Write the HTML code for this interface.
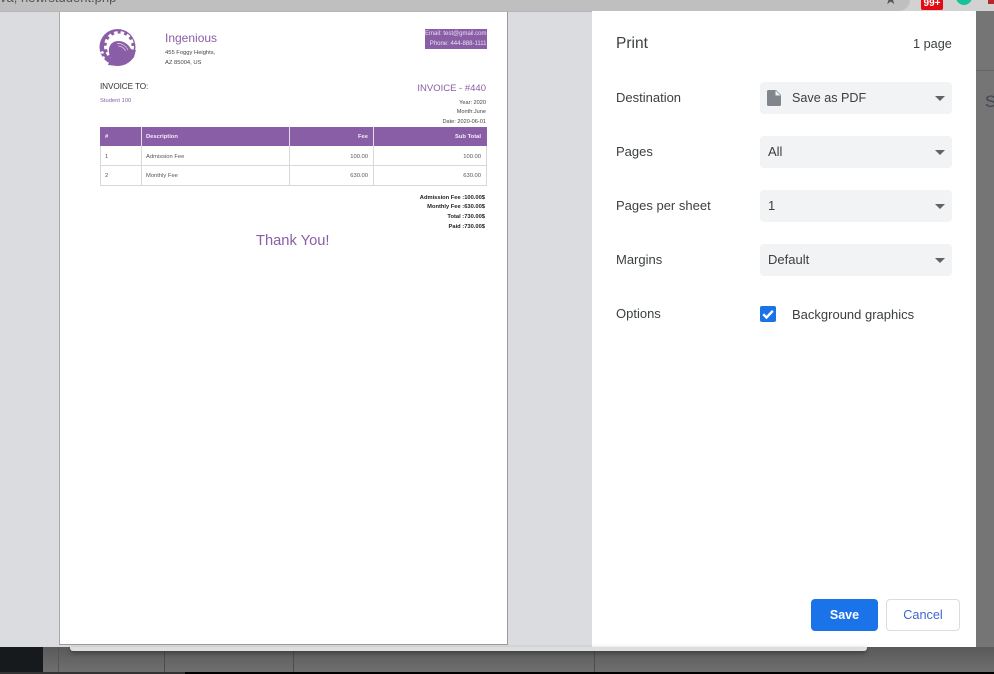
<!DOCTYPE html>
<html><head><meta charset="utf-8"><style>
html,body{margin:0;padding:0}
body{width:994px;height:674px;position:relative;overflow:hidden;background:#737373;font-family:"Liberation Sans",sans-serif}
.a{position:absolute;white-space:nowrap}
.l{left:616px;font-size:13px;color:#3c4043;line-height:16px}
.sel{left:760px;width:192px;height:32px;background:#f1f3f4;border-radius:4px}
.sel span{position:absolute;left:8px;top:8px;font-size:13px;line-height:16px;color:#3c4043}
.sel i{position:absolute;right:7px;top:14px;width:0;height:0;border-left:5.500px solid transparent;border-right:5.500px solid transparent;border-top:5px solid #5f6368}
.p{color:#8a5ea6}
.r{text-align:right}
.t{font-size:5.800px;line-height:9px;color:#555}
.h{font-size:5.800px;line-height:9px;font-weight:bold;color:#f3ecf7}
</style></head><body>
<div class="a" style="left:0;top:0;width:994px;height:11px;background:#d2d2d2"></div>
<div class="a" style="left:-20px;top:-12px;width:930px;height:23px;background:#bfbfbf;border-radius:0 12px 12px 0"></div>
<div class="a" style="left:0;top:-10px;font-size:13px;color:#555;line-height:16px">va, new/student.php</div>
<div class="a" style="left:884px;top:-8px;font-size:15px;color:#555;line-height:16px">★</div>
<div class="a" style="left:921px;top:0;width:22px;height:10px;background:#e30b13;color:#fff;font-size:10px;font-weight:bold;line-height:8px;text-align:center;border-radius:0 0 2px 2px">99+</div>
<div class="a" style="left:956px;top:-11px;width:16px;height:16px;border-radius:50%;background:#15c39a"></div>
<div class="a" style="left:988px;top:0;width:6px;height:4px;background:#b3282d"></div>
<div class="a" style="left:976px;top:11px;width:18px;height:636px;background:#757575"></div>
<div class="a" style="left:976px;top:70px;width:18px;height:1px;background:#666"></div>
<div class="a" style="left:985px;top:92px;font-size:17px;line-height:20px;color:#3f4750">S</div>

<div class="a" style="left:0;top:11px;width:592px;height:636px;background:#dadce0;border-top:1px solid #b5b5b5;box-sizing:border-box"></div>
<div class="a" style="left:592px;top:11px;width:384px;height:636px;background:#fff"></div>

<div class="a" style="left:0;top:647px;width:43px;height:25px;background:#161a1d"></div>
<div class="a" style="left:43px;top:647px;width:951px;height:25px;background:linear-gradient(#5a5a5a,#6f6f6f)"></div>
<div class="a" style="left:58px;top:647px;width:1px;height:25px;background:#555"></div>
<div class="a" style="left:164px;top:647px;width:1px;height:25px;background:#4c4c4c"></div>
<div class="a" style="left:293px;top:647px;width:1px;height:25px;background:#4c4c4c"></div>
<div class="a" style="left:594px;top:647px;width:1px;height:25px;background:#4c4c4c"></div>
<div class="a" style="left:0;top:672px;width:994px;height:2px;background:#000"></div>
<div class="a" style="left:0;top:672px;width:185px;height:2px;background:#333"></div>
<div class="a" style="left:70px;top:647px;width:797px;height:4px;background:#dedede;box-shadow:0 2px 5px rgba(0,0,0,.4);border-radius:0 0 3px 3px"></div>

<!-- paper -->
<div class="a" style="left:59px;top:12px;width:449px;height:633px;background:#fff;border-left:1px solid #aaa;border-right:1px solid #999;border-bottom:1px solid #999;box-sizing:border-box"></div>

<svg class="a" style="left:99px;top:28px" width="38" height="38" viewBox="0 0 38 38">
<circle cx="18.500" cy="19" r="18" fill="#8a5ea6"/>
<circle cx="20" cy="18" r="12.500" fill="#fff"/>
<circle cx="20" cy="18" r="13.500" fill="none" stroke="#fff" stroke-width="3" stroke-dasharray="3.500 3"/>
<path d="M1 24 l3 -1 l1 2 l-2 1z M3 29 l2 -1 l1 2 l-1 1z" fill="#fff"/>
<path d="M9 37 L12 29 C7 22 11 13 19 13 C26 13 30 17 33 23 L37 22 L35 29 C31 35 25 38 18 38 Z" fill="#8a5ea6"/>
<path d="M18 15.500 C23 15 27 18 29 22" fill="none" stroke="#d8c9e2" stroke-width=".8"/>
<path d="M19 18 C23 18 25 20 26.500 23" fill="none" stroke="#d8c9e2" stroke-width=".8"/>
</svg>

<div class="a p" style="left:165px;top:30px;font-size:12px;line-height:16px">Ingenious</div>
<div class="a" style="left:165px;top:49px;font-size:5.800px;line-height:9.500px;color:#444">455 Foggy Heights,<br>AZ 85004, US</div>
<div class="a" style="left:100px;top:81px;font-size:8.200px;line-height:12px;color:#333;letter-spacing:-.1px">INVOICE TO:</div>
<div class="a p" style="left:100px;top:97px;font-size:5.800px;line-height:9px">Student 100</div>

<div class="a r" style="left:425px;top:29px;width:62px;height:20px;background:#8a5ea6;color:#eadff0;font-size:6px;line-height:9.600px;overflow:hidden"><div style="padding-top:1px;margin-right:.5px">Email: test@gmail.com</div><div style="margin-right:.5px">Phone: 444-888-1111</div></div>
<div class="a p r" style="left:387px;top:82px;width:99px;font-size:9.500px;line-height:14px">INVOICE - #440</div>
<div class="a r" style="left:387px;top:98.500px;width:99px;font-size:5.600px;line-height:9.700px;color:#444">Year: 2020<br>Month:June<br>Date: 2020-06-01</div>

<!-- table -->
<div class="a" style="left:100px;top:127px;width:387px;height:19px;background:#8a5ea6"></div>
<div class="a" style="left:100px;top:146px;width:387px;height:40px;box-sizing:border-box;border:1px solid #d8d8d8;border-top:0"></div>
<div class="a" style="left:100px;top:165px;width:387px;height:1px;background:#d8d8d8"></div>
<div class="a" style="left:141px;top:127px;width:1px;height:58px;background:#e4dcea"></div>
<div class="a" style="left:289px;top:127px;width:1px;height:58px;background:#e4dcea"></div>
<div class="a" style="left:373px;top:127px;width:1px;height:58px;background:#e4dcea"></div>
<div class="a" style="left:141px;top:146px;width:1px;height:39px;background:#d8d8d8"></div>
<div class="a" style="left:289px;top:146px;width:1px;height:39px;background:#d8d8d8"></div>
<div class="a" style="left:373px;top:146px;width:1px;height:39px;background:#d8d8d8"></div>
<div class="a h" style="left:105px;top:133px">#</div>
<div class="a h" style="left:146px;top:133px">Description</div>
<div class="a r h" style="left:300px;top:133px;width:68px">Fee</div>
<div class="a r h" style="left:400px;top:133px;width:81px">Sub Total</div>
<div class="a t" style="left:105px;top:153px">1</div>
<div class="a t" style="left:146px;top:153px">Admission Fee</div>
<div class="a r t" style="left:300px;top:153px;width:68px">100.00</div>
<div class="a r t" style="left:400px;top:153px;width:81px">100.00</div>
<div class="a t" style="left:105px;top:172px">2</div>
<div class="a t" style="left:146px;top:172px">Monthly Fee</div>
<div class="a r t" style="left:300px;top:172px;width:68px">630.00</div>
<div class="a r t" style="left:400px;top:172px;width:81px">630.00</div>

<div class="a r" style="left:385px;top:193.500px;width:100px;font-size:5.750px;line-height:9.700px;font-weight:bold;color:#222">Admission Fee :100.00$<br>Monthly Fee :630.00$<br>Total :730.00$<br>Paid :730.00$</div>
<div class="a p" style="left:256px;top:231px;font-size:14.700px;line-height:20px">Thank You!</div>

<!-- sidebar -->
<div class="a" style="left:616px;top:35px;font-size:15.500px;line-height:18px;color:#3c4043">Print</div>
<div class="a" style="left:913px;top:36px;font-size:12.700px;line-height:16px;color:#3c4043;font-weight:500">1 page</div>

<div class="a l" style="top:90px">Destination</div>
<div class="a sel" style="top:82px"><span style="left:32px;font-size:12.600px">Save as PDF</span><i></i>
<svg class="a" style="left:7px;top:8px" width="14" height="16" viewBox="0 0 14 16"><path d="M1.500 0H9L14 5V14.500A1.500 1.500 0 0 1 12.500 16H1.500A1.500 1.500 0 0 1 0 14.500V1.500A1.500 1.500 0 0 1 1.500 0Z" fill="#80868b"/><path d="M8.500 0.500V5.500H13.500" fill="#f1f3f4"/></svg></div>

<div class="a l" style="top:144px">Pages</div>
<div class="a sel" style="top:136px"><span>All</span><i></i></div>
<div class="a l" style="top:198px">Pages per sheet</div>
<div class="a sel" style="top:190px"><span>1</span><i></i></div>
<div class="a l" style="top:252px">Margins</div>
<div class="a sel" style="top:244px"><span>Default</span><i></i></div>
<div class="a l" style="top:306px">Options</div>
<div class="a" style="left:760px;top:306px;width:16px;height:16px;background:#1a73e8;border-radius:2px"></div>
<svg class="a" style="left:760px;top:306px" width="16" height="16" viewBox="0 0 16 16"><path d="M3.200 8.200L6.500 11.500L12.800 4.800" fill="none" stroke="#fff" stroke-width="2.400"/></svg>
<div class="a l" style="left:792px;top:307px">Background graphics</div>

<div class="a" style="left:811px;top:599px;width:67px;height:32px;background:#1a73e8;border-radius:4px;color:#fff;font-size:12.500px;font-weight:bold;line-height:32px;text-align:center">Save</div>
<div class="a" style="left:886px;top:599px;width:74px;height:32px;box-sizing:border-box;background:#fff;border:1px solid #dadce0;border-radius:4px;color:#3f66d0;font-size:12.700px;line-height:30px;text-align:center">Cancel</div>
</body></html>
